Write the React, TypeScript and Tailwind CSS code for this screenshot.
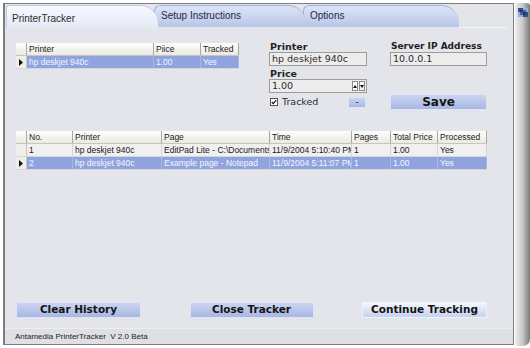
import React from "react";

type Col = { label: string; w: string };

const cols1: Col[] = [
  { label: "Printer", w: "w-[127px]" },
  { label: "Piice", w: "w-[47px]" },
  { label: "Tracked", w: "w-[38px]" },
];

const rows1 = [["hp deskjet 940c", "1.00", "Yes"]];

const cols2: Col[] = [
  { label: "No.", w: "w-[46px]" },
  { label: "Printer", w: "w-[89px]" },
  { label: "Page", w: "w-[108px]" },
  { label: "Time", w: "w-[82px]" },
  { label: "Pages", w: "w-[39px]" },
  { label: "Total Price", w: "w-[47px]" },
  { label: "Processed", w: "w-[49px]" },
];

const rows2 = [
  ["1", "hp deskjet 940c", "EditPad Lite - C:\\Documents and Settings", "11/9/2004 5:10:40 PM", "1", "1.00", "Yes"],
  ["2", "hp deskjet 940c", "Example page - Notepad", "11/9/2004 5:11:07 PM", "1", "1.00", "Yes"],
];

const Arrow = () => (
  <svg width="4" height="7" viewBox="0 0 4 7">
    <path d="M0 0 L4 3.5 L0 7 Z" fill="#111" />
  </svg>
);

const Grid = ({ cols, rows, selected }: { cols: Col[]; rows: string[][]; selected: number }) => (
  <div className="flex flex-col font-['Liberation_Sans',Arial,sans-serif] text-[8.5px]">
    <div className="flex h-[13px] bg-gradient-to-b from-[#fdfdfb] to-[#ebeae3] border-b border-[#c8c6b8]">
      <div className="w-[11px] border-r border-[#aca899]" />
      {cols.map((c) => (
        <div
          key={c.label}
          className={`${c.w} px-[2px] border-r border-[#aca899] leading-[13px] text-[#1a1a1a] whitespace-nowrap overflow-hidden`}
        >
          {c.label}
        </div>
      ))}
    </div>
    {rows.map((row, i) => (
      <div key={i} className="flex h-[13px] border-b border-[#d6d6d6]">
        <div className="w-[11px] flex items-center justify-center bg-[#efeee8] border-r border-[#c8c6b8]">
          {i === selected && <Arrow />}
        </div>
        {row.map((cell, j) => (
          <div
            key={j}
            className={`${cols[j].w} px-[2px] border-r leading-[12px] whitespace-nowrap overflow-hidden ${
              i === selected
                ? "bg-[#8fa3de] text-[#f4f6ff] border-[#a9b8e6]"
                : "bg-[#f0f0f0] text-[#1a1a1a] border-[#d6d6d6]"
            }`}
          >
            {cell}
          </div>
        ))}
      </div>
    ))}
  </div>
);

const Label = ({ children, small }: { children: React.ReactNode; small?: boolean }) => (
  <div
    className={`font-['DejaVu_Sans',Verdana,sans-serif] font-bold leading-[11px] text-[#1f1f1f] pl-[1px] whitespace-nowrap ${
      small ? "text-[9px]" : "text-[9.5px]"
    }`}
  >
    {children}
  </div>
);

const Field = ({ value, children }: { value: string; children?: React.ReactNode }) => (
  <div className="h-[14px] flex items-center border border-[#9c9c9c] bg-[#ececec] pl-[2px] pr-[1px] font-['DejaVu_Sans',Verdana,sans-serif] text-[9.5px] text-[#2b2b2b]">
    <span className="flex-1">{value}</span>
    {children}
  </div>
);

const Button = ({ label, light, className }: { label: string; light?: boolean; className: string }) => (
  <button
    type="button"
    className={`${className} flex items-center justify-center border font-['DejaVu_Sans',Verdana,sans-serif] font-bold text-[#141414] bg-gradient-to-b ${
      light
        ? "from-[#f5f7fd] to-[#c5d1f0] border-[#eef2fc]"
        : "from-[#cbd5f1] to-[#a8b7e2] border-[#dde4f6]"
    }`}
  >
    {label}
  </button>
);

export default function App() {
  return (
    <div className="w-[530px] h-[348px] bg-white flex overflow-hidden">
      {/* main window */}
      <div className="w-[511px] ml-[3px] mt-[3px] mb-[3px] flex flex-col border-l-2 border-t border-b border-r border-[#7d7d7d] bg-[#e3e5eb]">
        {/* tabs */}
        <div className="h-[24px] flex items-end pl-[1px] relative">
          <div className="w-[152px] h-[23px] rounded-tl-[3px] rounded-tr-[18px] bg-gradient-to-b from-[#f7f9fe] to-[#e4eaf6] border-t border-l border-[#c3cbe0] pl-[5px] pt-[7px] font-['Liberation_Sans',Arial,sans-serif] text-[10px] leading-[12px] text-[#2e2e2e] z-10">
            PrinterTracker
          </div>
          <div className="w-[152px] h-[22px] -ml-[4px] mb-[1px] rounded-tl-[6px] rounded-tr-[18px] bg-gradient-to-b from-[#dce5f6] to-[#b7c6e9] border-t border-l border-[#9fb0d6] pl-[6px] pt-[4px] font-['Liberation_Sans',Arial,sans-serif] text-[10px] leading-[12px] text-[#1c2a4a] z-[5]">
            Setup Instructions
          </div>
          <div className="w-[156px] h-[22px] -ml-[3px] mb-[1px] rounded-tl-[6px] rounded-tr-[18px] bg-gradient-to-b from-[#dce5f6] to-[#b7c6e9] border-t border-l border-[#9fb0d6] pl-[6px] pt-[4px] font-['Liberation_Sans',Arial,sans-serif] text-[10px] leading-[12px] text-[#1c2a4a]">
            Options
          </div>
          <div className="flex-1 h-[1px] mr-[5px] bg-[#f4f5f8]" />
        </div>

        {/* content */}
        <div className="flex-1 flex flex-col pl-[11px] pt-[13px] pb-[10px]">
          <div className="flex">
            <div className="w-[223px] mt-[2px]">
              <Grid cols={cols1} rows={rows1} selected={0} />
            </div>
            <div className="w-[98px] ml-[30px] flex flex-col">
              <Label>Printer</Label>
              <Field value="hp deskjet 940c" />
              <div className="mt-[2px]">
                <Label>Price</Label>
              </div>
              <Field value="1.00">
                <span className="flex gap-[1px]">
                  <span className="w-[6px] h-[10px] bg-white border border-[#8a8a8a] flex items-center justify-center">
                    <svg width="4" height="3" viewBox="0 0 4 3">
                      <path d="M0 3 L2 0 L4 3 Z" fill="#111" />
                    </svg>
                  </span>
                  <span className="w-[6px] h-[10px] bg-[#f4f4f4] border border-[#8a8a8a] flex items-center justify-center">
                    <svg width="4" height="3" viewBox="0 0 4 3">
                      <path d="M0 0 L2 3 L4 0 Z" fill="#111" />
                    </svg>
                  </span>
                </span>
              </Field>
              <div className="mt-[3px] h-[12px] flex items-center">
                <span className="w-[8px] h-[8px] ml-[1px] border border-[#555] bg-white flex items-center justify-center">
                  <svg width="6" height="6" viewBox="0 0 6 6">
                    <path d="M0.8 3 L2.3 4.6 L5.2 1.2" stroke="#111" strokeWidth="1.2" fill="none" />
                  </svg>
                </span>
                <span className="ml-[4px] font-['DejaVu_Sans',Verdana,sans-serif] text-[9.5px] text-[#2b2b2b] flex-1">
                  Tracked
                </span>
                <span className="w-[18px] h-[11px] mr-[1px] bg-gradient-to-b from-[#cbd5f1] to-[#a9b8e3] border border-[#dde4f6] flex items-center justify-center text-[9px] leading-none text-[#222] font-['DejaVu_Sans',sans-serif]">
                  -
                </span>
              </div>
            </div>
            <div className="w-[97px] ml-[23px] flex flex-col">
              <Label small>Server IP Address</Label>
              <Field value="10.0.0.1" />
              <Button label="Save" className="mt-[28px] h-[16px] w-[97px] text-[12px]" />
            </div>
          </div>

          <div className="mt-[21px] w-[471px]">
            <Grid cols={cols2} rows={rows2} selected={1} />
          </div>

          <div className="flex-1" />

          <div className="w-[471px] flex justify-between">
            <Button label="Clear History" className="w-[125px] h-[16px] text-[10.5px]" />
            <Button label="Close Tracker" className="w-[124px] h-[16px] text-[10.5px]" />
            <Button label="Continue Tracking" light className="w-[125px] h-[16px] text-[10.5px]" />
          </div>
        </div>

        {/* status bar */}
        <div className="h-[16px] flex items-center pl-[10px] bg-[#dfe0e3] border-t border-[#eceef2] font-['Liberation_Sans',Arial,sans-serif] text-[8px] text-[#222]">
          Antamedia PrinterTracker&nbsp; V 2.0 Beta
        </div>
      </div>

      {/* right frame bar */}
      <div className="w-[15px] ml-[1px] mt-[3px] mb-[2px] rounded-tr-[3px] rounded-br-[7px] bg-gradient-to-r from-[#eeeeee] via-[#c9c9c9] to-[#7b7b7b] flex flex-col items-center pt-[5px]">
        <svg width="10" height="9" viewBox="0 0 10 9">
          <rect x="0" y="0" width="5" height="4" fill="#2d4f8a" />
          <rect x="5" y="4" width="5" height="5" fill="#2d4f8a" />
          <rect x="5" y="0" width="5" height="4" fill="#8fb0d8" />
          <rect x="0" y="4" width="5" height="5" fill="#8fb0d8" />
          <rect x="2" y="2" width="6" height="5" fill="#1c2f55" opacity="0.6" />
        </svg>
      </div>
    </div>
  );
}
